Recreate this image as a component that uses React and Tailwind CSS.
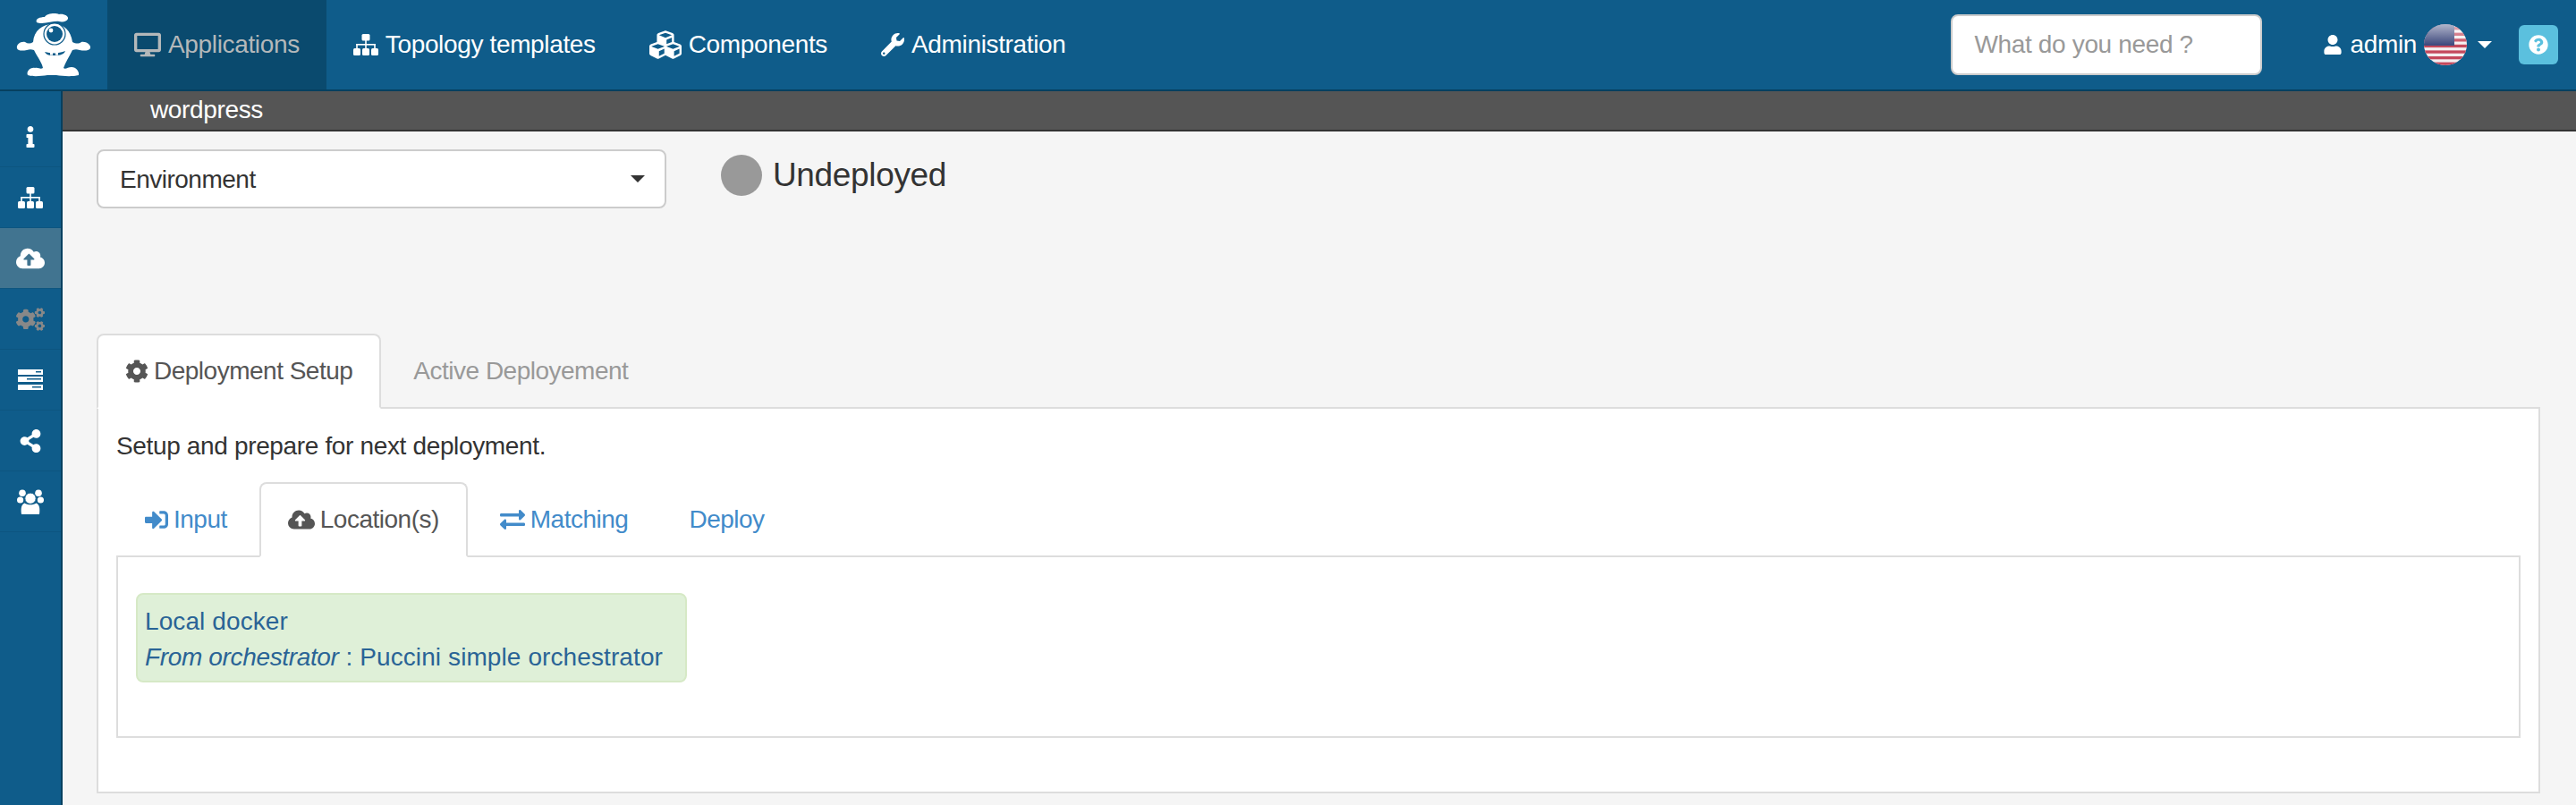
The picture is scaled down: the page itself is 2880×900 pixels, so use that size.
import React from "react";
import {
  FaDesktop,
  FaCubes,
  FaWrench,
  FaUser,
  FaCog,
  FaCloudUploadAlt,
  FaCogs,
  FaShareAlt,
  FaInfo,
  FaSignInAlt,
  FaExchangeAlt,
  FaQuestionCircle,
} from "react-icons/fa";

function Mascot() {
  return (
    <svg viewBox="15 10 90 80" className="h-[80px] w-[90px]">
      <path
        fill="#fff"
        d="M41 25C39 21 45 19 50 19C52 15 62 14 66 16C71 15 77 18 76 21C75 24 70 25 66 24C60 23 48 28 41 25Z"
      />
      <path
        fill="#fff"
        d="M60 27C72 27 79 34 81 47C85 49 88 49 91 47C96 46 102 50 101 54C99 57 94 57 89 56C86 55 84 55 81 56C77 64 73 70 71 76C73 78 76 75 80 75C85 75 89 80 88 84C80 86 70 85 63 84C60 84 57 84 53 84C46 85 37 86 31 84C29 80 34 75 39 76C43 75 45 78 48 76C47 70 42 64 38 56C35 55 33 55 30 56C25 57 20 57 19 54C18 50 23 46 28 47C31 49 34 49 37 47C38 34 47 27 60 27Z"
      />
      <circle cx="61" cy="38" r="12" fill="#fff" stroke="#0f5c8a" strokeWidth="1.2" />
      <circle cx="61" cy="38" r="9" fill="#0f5c8a" />
      <circle cx="57" cy="34" r="2.4" fill="#fff" />
      <path fill="#0f5c8a" d="M50 58C57 60 66 60 73 57C71 62 64 62 60 62C56 62 52 62 50 58Z" />
      <rect x="56" y="59" width="3" height="2.6" fill="#fff" />
      <rect x="62" y="59" width="3" height="2.6" fill="#fff" />
    </svg>
  );
}

function Flag() {
  const stripes = [0, 1, 2, 3, 4, 5, 6];
  return (
    <svg viewBox="0 0 48 46" className="h-[46px] w-[48px]">
      <defs>
        <clipPath id="flag-clip">
          <ellipse cx="24" cy="23" rx="24" ry="23" />
        </clipPath>
        <linearGradient id="flag-fade" x1="0" y1="0" x2="0" y2="1">
          <stop offset="0" stopColor="#fff" stopOpacity="0.6" />
          <stop offset="0.5" stopColor="#fff" stopOpacity="0" />
        </linearGradient>
      </defs>
      <g clipPath="url(#flag-clip)">
        <rect width="48" height="46" fill="#f4eef0" />
        {stripes.map((i) => (
          <rect key={i} y={i * 6.6 + 3} width="48" height="3.3" fill="#c4485c" />
        ))}
        <rect width="34" height="24" fill="#3f4a7e" />
        <rect width="48" height="46" fill="url(#flag-fade)" />
      </g>
    </svg>
  );
}

function SitemapIcon() {
  return (
    <svg viewBox="0 0 28 24" className="h-[24px] w-[28px]" fill="currentColor">
      <rect x="9.5" y="0" width="9" height="7.5" rx="1.5" />
      <rect x="13.2" y="7" width="1.6" height="10" />
      <rect x="3.2" y="11" width="21.6" height="1.6" />
      <rect x="3.2" y="11" width="1.6" height="6" />
      <rect x="23.2" y="11" width="1.6" height="6" />
      <rect x="0" y="16" width="8" height="8" rx="1.5" />
      <rect x="10" y="16" width="8" height="8" rx="1.5" />
      <rect x="20" y="16" width="8" height="8" rx="1.5" />
    </svg>
  );
}

function ServerIcon() {
  return (
    <svg viewBox="0 0 28 23" className="h-[23px] w-[28px]" fill="#fff">
      <path
        fillRule="evenodd"
        d="M0 0h28v6H0zM20 2v1.5h6V2zM0 8h28v6H0zM10 10v1.5h16V10zM0 17h28v6H0zM16 19v1.5h10V19z"
      />
    </svg>
  );
}

function UsersIcon() {
  return (
    <svg viewBox="0 0 30 28" className="h-[28px] w-[30px]" fill="#fff">
      <circle cx="6" cy="4.2" r="3.8" />
      <circle cx="24" cy="4.2" r="3.8" />
      <ellipse cx="3.6" cy="12" rx="3.6" ry="3.6" />
      <ellipse cx="26.4" cy="12" rx="3.6" ry="3.6" />
      <path d="M5 28C4.2 22 4.6 16.6 8.6 15.4C11 17.8 19 17.8 21.4 15.4C25.4 16.6 25.8 22 25 28C20 28 10 28 5 28Z" />
      <circle cx="15" cy="10.2" r="6.2" stroke="#0f5c8a" strokeWidth="1" />
    </svg>
  );
}

function NavItem({ icon, label, active }) {
  return (
    <div
      className={
        "flex h-[100px] items-center gap-[8px] px-[30px] " +
        (active ? "bg-[#0a4a6e] text-[#b4b8ba]" : "text-white")
      }
    >
      {icon}
      <span>{label}</span>
    </div>
  );
}

function SideItem({ children, active }) {
  return (
    <div
      className={
        "flex h-[68px] items-center justify-center border-b border-[#0d5580] " +
        (active ? "bg-[#417490]" : "")
      }
    >
      {children}
    </div>
  );
}

function Tab({ icon, label, active, muted, blue }) {
  let cls = "text-[#555]";
  if (muted) cls = "text-[#999]";
  if (blue) cls = "text-[#428bca]";
  return (
    <div
      className={
        "relative -mb-[2px] mr-[4px] flex h-[84px] items-center gap-[6px] rounded-t-[8px] border-2 px-[30px] tracking-[-0.5px] " +
        cls +
        (active ? " border-[#ddd] border-b-white bg-white" : " border-transparent")
      }
    >
      {icon}
      <span>{label}</span>
    </div>
  );
}

export default function App() {
  return (
    <div className="flex h-[900px] flex-col overflow-hidden bg-[#f5f5f5] text-[28px] leading-[40px] tracking-[-0.35px] text-[#333] [font-family:'Liberation_Sans',Arial,sans-serif]">
      {/* top navbar */}
      <div className="flex h-[102px] shrink-0 items-start border-b-2 border-[#064060] bg-[#0f5c8a]">
        <div className="flex h-[100px] w-[120px] items-center justify-center">
          <Mascot />
        </div>
        <NavItem active icon={<FaDesktop className="text-[30px]" />} label="Applications" />
        <NavItem icon={<SitemapIcon />} label="Topology templates" />
        <NavItem icon={<FaCubes className="text-[36px]" />} label="Components" />
        <NavItem icon={<FaWrench className="text-[26px]" />} label="Administration" />
        <div className="ml-auto flex h-[100px] items-center pr-[20px]">
          <div className="flex h-[68px] w-[348px] items-center rounded-[8px] border-2 border-[#ccc] bg-white px-[24px] text-[#999]">
            What do you need ?
          </div>
          <FaUser className="ml-[68px] text-[22px] text-white" />
          <span className="ml-[8px] text-white">admin</span>
          <div className="ml-[8px]">
            <Flag />
          </div>
          <div className="ml-[12px] h-0 w-0 border-x-[8px] border-t-[8px] border-x-transparent border-t-white" />
          <div className="ml-[30px] flex h-[44px] w-[44px] items-center justify-center rounded-[6px] bg-[#5bc0de]">
            <FaQuestionCircle className="text-[22px] text-white" />
          </div>
        </div>
      </div>

      <div className="flex min-h-0 flex-1">
        {/* left sidebar */}
        <div className="w-[70px] shrink-0 border-r-2 border-[#064060] bg-[#0f5c8a] pt-[17px] text-white">
          <SideItem>
            <FaInfo className="text-[24px]" />
          </SideItem>
          <SideItem>
            <SitemapIcon />
          </SideItem>
          <SideItem active>
            <FaCloudUploadAlt className="text-[32px]" />
          </SideItem>
          <SideItem>
            <FaCogs className="text-[32px] text-[#888]" />
          </SideItem>
          <SideItem>
            <ServerIcon />
          </SideItem>
          <SideItem>
            <FaShareAlt className="text-[26px]" />
          </SideItem>
          <SideItem>
            <UsersIcon />
          </SideItem>
        </div>

        <div className="min-w-0 flex-1">
          <div className="h-[45px] border-b-2 border-[#333] bg-[#555] pl-[98px] leading-[41px] text-white">
            wordpress
          </div>

          <div className="pl-[38px] pr-[40px] pt-[20px]">
            <div className="flex items-start">
              <div className="flex h-[66px] w-[637px] items-center justify-between rounded-[8px] border-2 border-[#ccc] bg-white pl-[24px] pr-[22px]">
                <span className="pt-[2px] tracking-[-0.5px]">Environment</span>
                <div className="h-0 w-0 border-x-[8px] border-t-[8px] border-x-transparent border-t-[#333]" />
              </div>
              <div className="ml-[61px] flex items-center gap-[12px] pt-[6px]">
                <div className="h-[46px] w-[46px] rounded-full bg-[#999]" />
                <span className="text-[37px]">Undeployed</span>
              </div>
            </div>

            {/* outer tabs */}
            <div className="mt-[140px] flex border-b-2 border-[#ddd]">
              <Tab active icon={<FaCog className="text-[26px]" />} label="Deployment Setup" />
              <Tab muted label="Active Deployement" />
            </div>
            <div className="h-[430px] border-2 border-t-0 border-[#ddd] bg-white px-[20px] pt-[22px]">
              <div>Setup and prepare for next deployment.</div>

              {/* inner tabs */}
              <div className="mt-[20px] flex border-b-2 border-[#ddd]">
                <Tab blue icon={<FaSignInAlt className="text-[26px]" />} label="Input" />
                <Tab active icon={<FaCloudUploadAlt className="text-[30px]" />} label="Location(s)" />
                <Tab blue icon={<FaExchangeAlt className="text-[28px]" />} label="Matching" />
                <Tab blue label="Deploy" />
              </div>
              <div className="h-[202px] border-2 border-t-0 border-[#ddd] px-[20px] pt-[40px]">
                <div className="h-[100px] w-[616px] rounded-[8px] border-2 border-[#d6e9c6] bg-[#dff0d8] pl-[8px] pt-[10px] tracking-[0.1px] text-[#2a6496]">
                  <div>Local docker</div>
                  <div>
                    <i className="tracking-[-0.35px]">From orchestrator</i> : Puccini simple orchestrator
                  </div>
                </div>
              </div>
            </div>
          </div>
        </div>
      </div>
    </div>
  );
}
